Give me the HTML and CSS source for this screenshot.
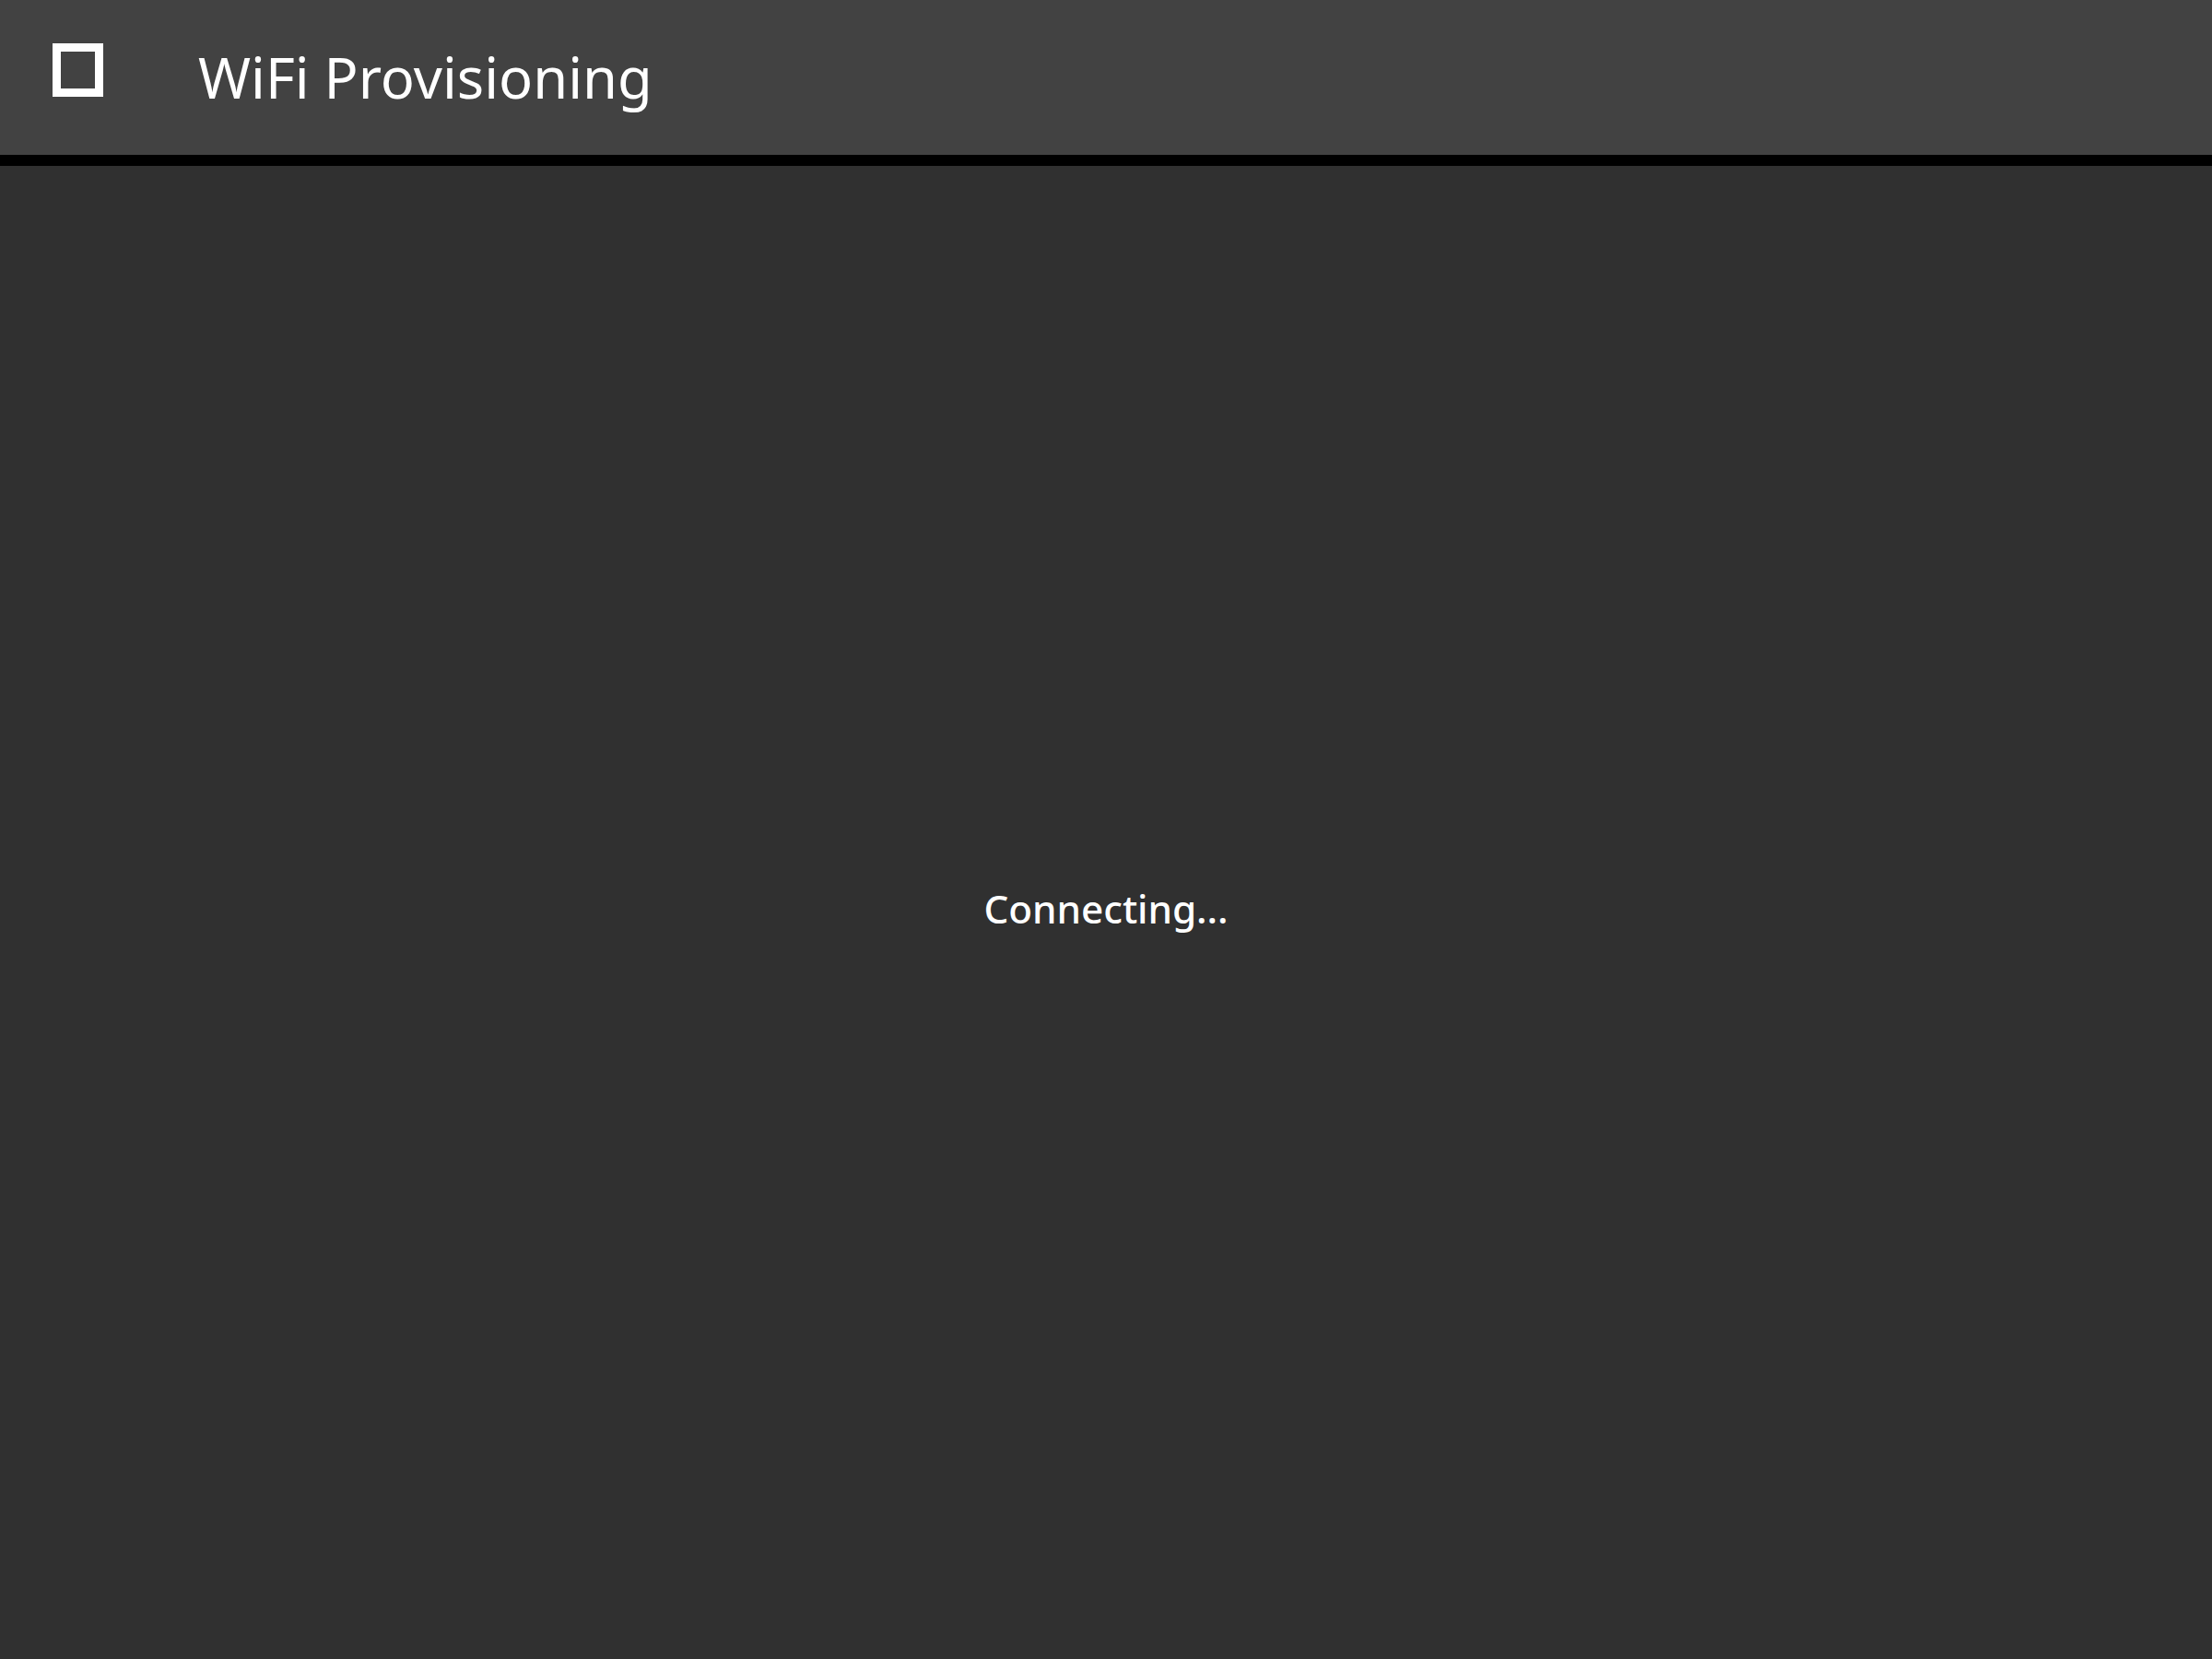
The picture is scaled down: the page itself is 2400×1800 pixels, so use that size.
FILE: index.html
```html
<!DOCTYPE html>
<html>
<head>
<meta charset="utf-8">
<link rel="stylesheet" href="styles.css">
</head>
<body>
<header class="appbar">
  <div class="nav-icon"></div>
  <h1 class="title">WiFi Provisioning</h1>
</header>
<main class="content">
  <p class="status">Connecting...</p>
</main>
</body>
</html>
```
FILE: styles.css
```css
html, body {
  margin: 0;
  padding: 0;
  background: #303030;
  font-family: "Noto Sans", "Open Sans", sans-serif;
  color: #ffffff;
}
.appbar {
  height: 168px;
  background: #424242;
  border-bottom: 12px solid #000000;
  display: flex;
  align-items: center;
  padding-left: 57px;
}
.nav-icon {
  width: 37px;
  height: 40px;
  border: 9px solid #ffffff;
  margin-bottom: 16px;
  flex: none;
}
.title {
  margin: 0 0 0 103px;
  font-size: 61.4px;
  font-weight: 400;
  line-height: 1;
}
.content {
  height: 1620px;
  display: flex;
  align-items: center;
  justify-content: center;
}
.status {
  margin: 0 0 8px 0;
  font-size: 42.2px;
  font-weight: 500;
  line-height: 1;
}
```
